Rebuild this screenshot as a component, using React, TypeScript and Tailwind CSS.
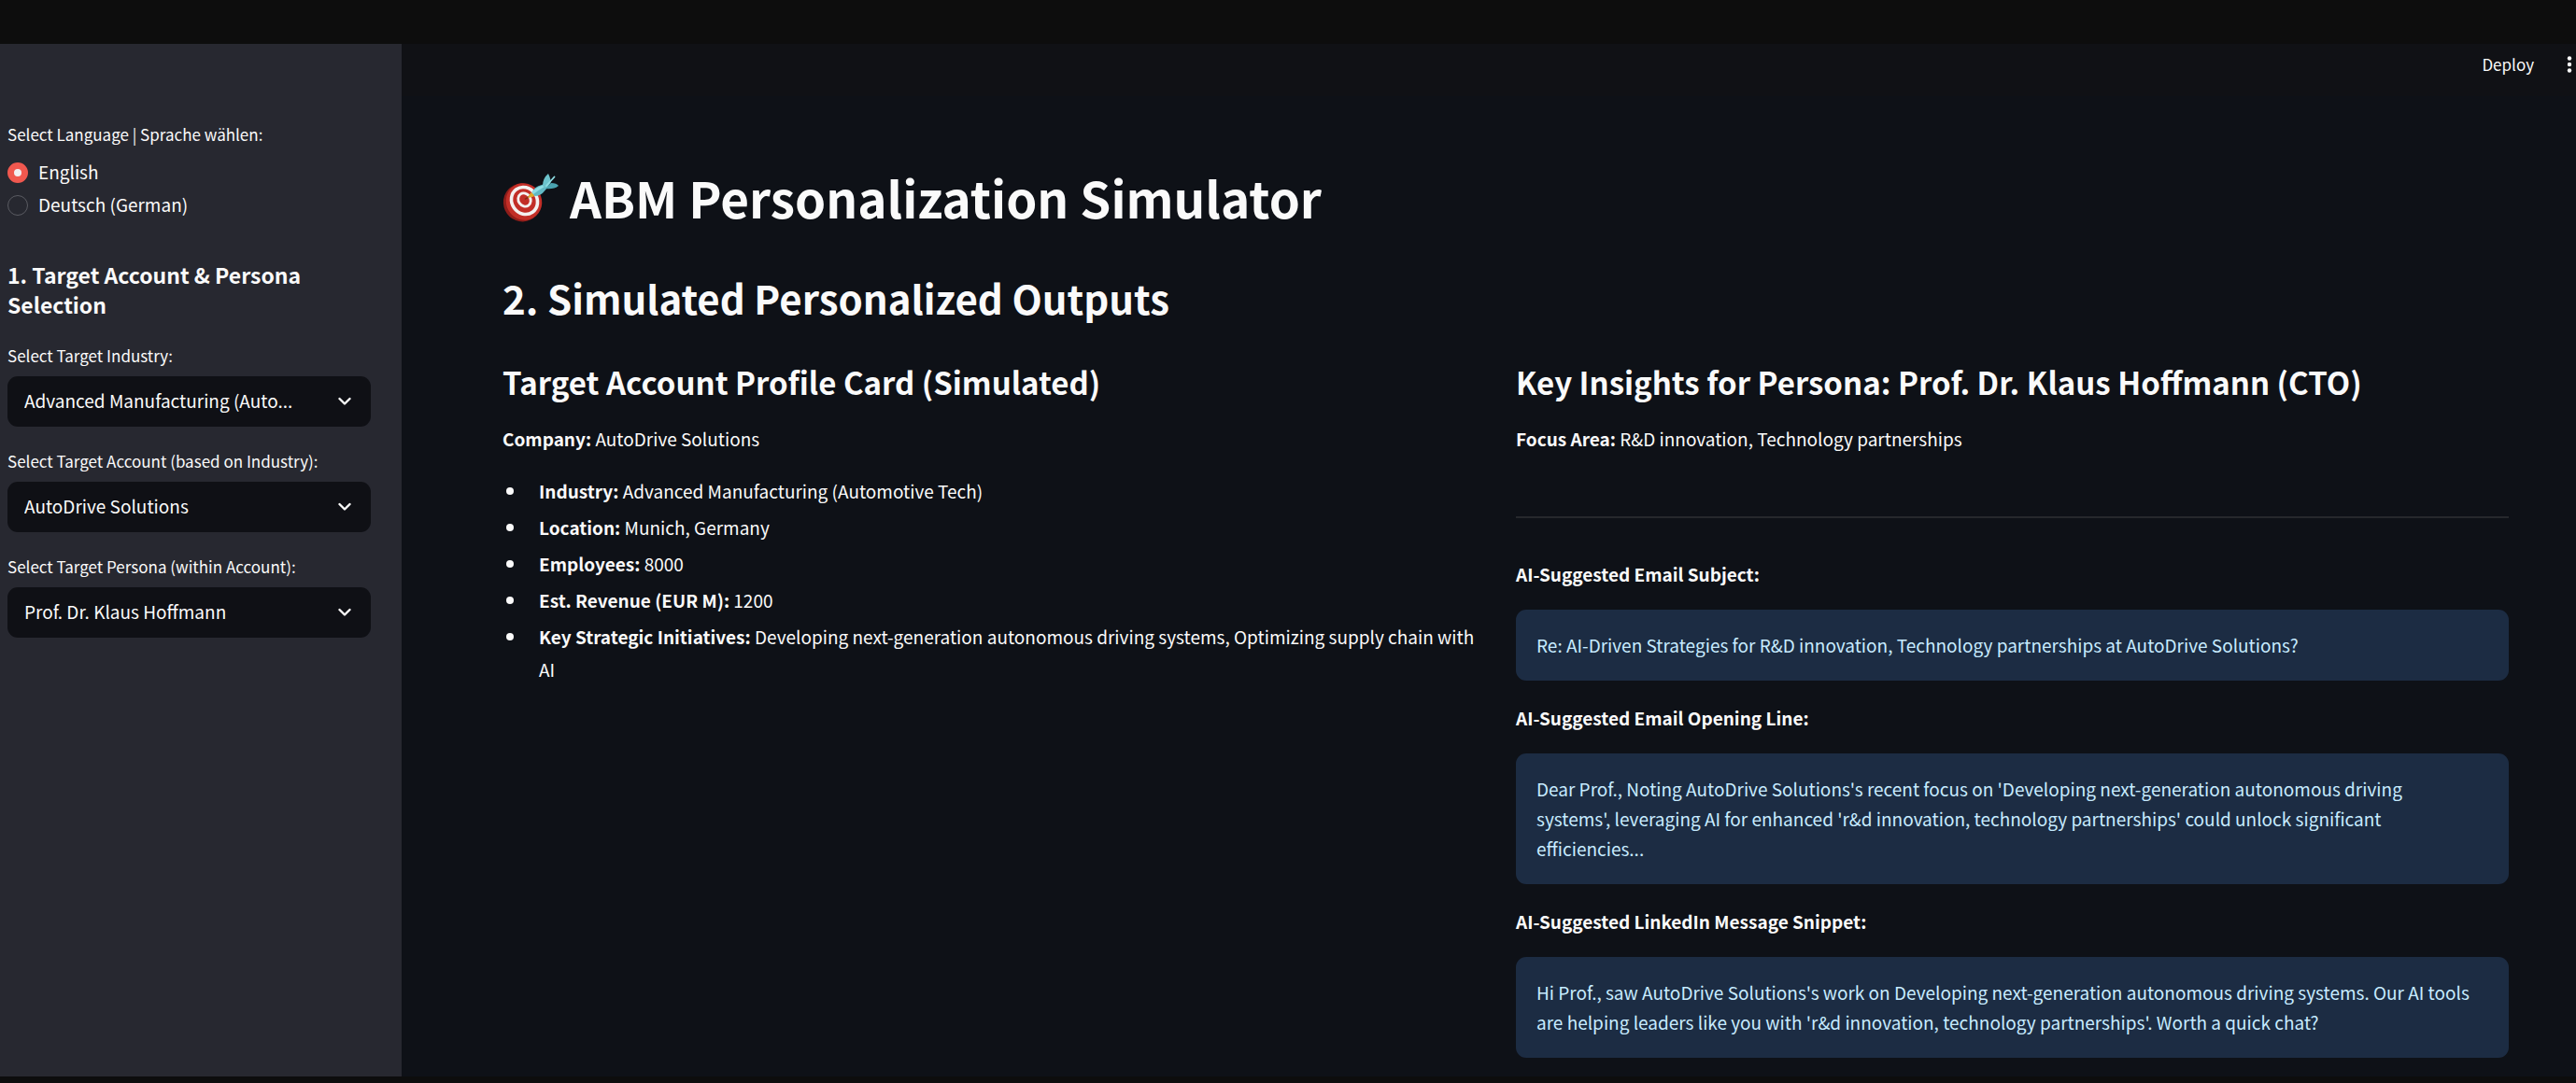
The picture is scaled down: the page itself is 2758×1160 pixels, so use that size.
import { useState } from "react";

function TargetIcon() {
  return (
    <svg viewBox="0 0 80 70" className="h-[70px] w-20 shrink-0 -ml-2" aria-hidden="true">
      <ellipse cx="29" cy="41" rx="20" ry="20.5" transform="rotate(-25 29 41)" fill="#8f1d1a" />
      <ellipse cx="31" cy="40" rx="19" ry="20" transform="rotate(-30 31 40)" fill="#c22e27" />
      <ellipse cx="31.500" cy="39" rx="13.500" ry="15" transform="rotate(-35 31.500 39)" fill="#c22e27" stroke="#f4f1f0" strokeWidth="3.600" />
      <ellipse cx="31.500" cy="38" rx="6.400" ry="7.400" transform="rotate(-35 31.500 38)" fill="#c22e27" stroke="#f4f1f0" strokeWidth="2.800" />
      <path d="M32 37.500 L40 32" stroke="#7c2d12" strokeWidth="1.500" />
      <path d="M35 36 L38 30.500 L43 31 L41.500 34.500 Z" fill="#e0a92b" />
      <path d="M39.500 30 Q42 24 50 22 L55 20 L57 24 L53.500 28 Q49 34 42.500 34 Z" fill="#62b9c4" />
      <path d="M39.500 30 Q43 25 51 22.500 L53 24 Q46 28 41 32 Z" fill="#8fdde4" />
      <path d="M51 23 Q51 15 57 10 Q60 16 59.500 20 L55 26 Z" fill="#6cc3cc" />
      <path d="M54 26 L60 20 Q66 20 68 23 Q63 27 54 26 Z" fill="#4aa3b0" />
      <path d="M55 23 L63.500 13.500" stroke="#8fdde4" strokeWidth="1.800" strokeLinecap="round" />
    </svg>
  );
}

function Chevron() {
  return (
    <svg viewBox="0 0 14 10" className="pointer-events-none absolute right-[21px] top-[22px] h-[10px] w-[14px]" fill="none" stroke="#fafafa" strokeWidth="2.400" strokeLinecap="round" strokeLinejoin="round" aria-hidden="true">
      <path d="M1.500 2 L7 7.500 L12.500 2" />
    </svg>
  );
}

function SelectField({ id, label, options }: { id: string; label: string; options: string[] }) {
  return (
    <div>
      <label htmlFor={id} className="mb-[9px] block text-[17px] leading-[26px]">
        {label}
      </label>
      <div className="relative">
        <select
          id={id}
          className="h-[54px] w-full appearance-none rounded-[11px] bg-[#0f1015] pb-[2px] pl-[18px] pr-12 text-[19px] text-[#fafafa]"
        >
          {options.map((o) => (
            <option key={o} value={o}>
              {o.length > 30 ? `${o.slice(0, 28)}...` : o}
            </option>
          ))}
        </select>
        <Chevron />
      </div>
    </div>
  );
}

const languages = ["English", "Deutsch (German)"];

function Sidebar() {
  const [language, setLanguage] = useState(languages[0]);
  return (
    <aside className="w-[430px] shrink-0 bg-[#272830] pt-[84px] pl-2 pr-[33px]">
      <fieldset>
        <legend className="mb-[10px] text-[17px] leading-[26px]">Select Language | Sprache wählen:</legend>
        {languages.map((l) => (
          <label key={l} className="flex h-[35px] items-center gap-[11px] text-[19px]">
            <input
              type="radio"
              name="language"
              checked={language === l}
              onChange={() => setLanguage(l)}
              className="size-[22px] appearance-none rounded-full border border-[#5a5b62] checked:border-[7px] checked:border-[#f0584f] checked:bg-[#f1eff2]"
            />
            {l}
          </label>
        ))}
      </fieldset>
      <h2 className="mt-[41px] mb-[26px] text-[23px] font-bold leading-8">1. Target Account &amp; Persona Selection</h2>
      <div className="flex flex-col gap-6">
        <SelectField id="industry" label="Select Target Industry:" options={["Advanced Manufacturing (Automotive Tech)"]} />
        <SelectField id="account" label="Select Target Account (based on Industry):" options={["AutoDrive Solutions"]} />
        <SelectField id="persona" label="Select Target Persona (within Account):" options={["Prof. Dr. Klaus Hoffmann"]} />
      </div>
    </aside>
  );
}

const facts = [
  ["Industry:", "Advanced Manufacturing (Automotive Tech)"],
  ["Location:", "Munich, Germany"],
  ["Employees:", "8000"],
  ["Est. Revenue (EUR M):", "1200"],
  ["Key Strategic Initiatives:", "Developing next-generation autonomous driving systems, Optimizing supply chain with AI"],
];

const suggestions = [
  ["AI-Suggested Email Subject:", "Re: AI-Driven Strategies for R&D innovation, Technology partnerships at AutoDrive Solutions?"],
  [
    "AI-Suggested Email Opening Line:",
    "Dear Prof., Noting AutoDrive Solutions's recent focus on 'Developing next-generation autonomous driving systems', leveraging AI for enhanced 'r&d innovation, technology partnerships' could unlock significant efficiencies...",
  ],
  [
    "AI-Suggested LinkedIn Message Snippet:",
    "Hi Prof., saw AutoDrive Solutions's work on Developing next-generation autonomous driving systems. Our AI tools are helping leaders like you with 'r&d innovation, technology partnerships'. Worth a quick chat?",
  ],
];

export default function App() {
  return (
    <div className="flex min-h-screen flex-col bg-[#0d0d0d] pt-[47px] pb-[7px] font-['Noto_Sans_CJK_SC',sans-serif] text-[#fafafa]">
      <div className="flex grow bg-[#0e1117]">
        <Sidebar />
        <div className="min-w-0 grow">
          <header className="flex h-14 items-center justify-end gap-[35px] bg-[#101115] pb-3 pr-1">
            <button className="text-[17px] leading-[26px]">Deploy</button>
            <button aria-label="Main menu">
              <svg viewBox="0 0 6 20" className="h-5 w-[6px]" fill="#fafafa" aria-hidden="true">
                <circle cx="3" cy="3.500" r="2.200" />
                <circle cx="3" cy="10" r="2.200" />
                <circle cx="3" cy="16.500" r="2.200" />
              </svg>
            </button>
          </header>
          <main className="pb-4 pl-[108px] pr-[72px]">
            <div className="mt-[73px] flex h-[70px] items-center">
              <TargetIcon />
              <h1 className="text-[53px] font-bold leading-[70px]">ABM Personalization Simulator</h1>
            </div>
            <h2 className="mt-11 text-[42px] font-bold leading-[58px]">2. Simulated Personalized Outputs</h2>
            <div className="mt-[38px] grid grid-cols-2 gap-[22px]">
              <section>
                <h3 className="text-[33px] font-bold leading-[46px]">Target Account Profile Card (Simulated)</h3>
                <p className="mt-5 text-[19px] leading-[35px]">
                  <strong>Company:</strong> AutoDrive Solutions
                </p>
                <ul className="mt-[21px] flex flex-col gap-1 pr-2 text-[19px] leading-[35px]">
                  {facts.map(([k, v]) => (
                    <li key={k} className="flex gap-[27px] pl-1">
                      <span className="mt-[14px] size-2 shrink-0 rounded-full bg-[#fafafa]" />
                      <span>
                        <strong>{k}</strong> {v}
                      </span>
                    </li>
                  ))}
                </ul>
              </section>
              <section>
                <h3 className="text-[33px] font-bold leading-[46px]">Key Insights for Persona: Prof. Dr. Klaus Hoffmann (CTO)</h3>
                <p className="mt-5 text-[19px] leading-[35px]">
                  <strong>Focus Area:</strong> R&amp;D innovation, Technology partnerships
                </p>
                <hr className="mt-[66px] mb-[42px] border-t-2 border-[#26282c]" />
                <div className="flex flex-col gap-[22px]">
                  {suggestions.map(([title, text]) => (
                    <div key={title}>
                      <h4 className="text-[19px] font-bold leading-[35px]">{title}</h4>
                      <p className="mt-[21px] rounded-[11px] bg-[#1c2c43] py-[22px] pl-[22px] pr-8 text-[19px] leading-8 text-[#c7ebff]">{text}</p>
                    </div>
                  ))}
                </div>
              </section>
            </div>
          </main>
        </div>
      </div>
    </div>
  );
}
